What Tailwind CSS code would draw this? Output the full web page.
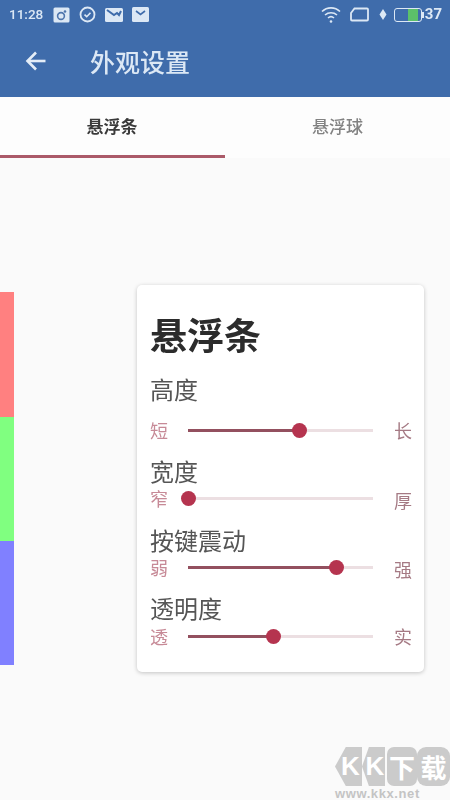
<!DOCTYPE html>
<html lang="zh">
<head>
<meta charset="utf-8">
<script src="https://cdn.jsdelivr.net/npm/@tailwindcss/browser@4"></script>
</head>
<body class="m-0">
<div class="relative w-[450px] h-[800px] overflow-hidden bg-[#fafafa] font-['Noto_Sans_CJK_SC','Noto_Sans',sans-serif]">
  <!-- header -->
  <header class="h-[97px] bg-[#3f6cab] text-[#dce8f5] shadow-[0_1px_2px_rgba(0,0,0,0.2)] flex flex-col">
    <div class="h-[28px] flex items-center px-[9px] pt-[1px]">
      <span class="font-['Roboto'] text-[13.5px] font-medium blur-[0.4px]">11:28</span>
      <div class="flex items-center gap-[9px] ml-[10px] blur-[0.4px]">
        <svg width="17" height="16" viewBox="0 0 17 16"><rect x="0.5" y="0.5" width="16" height="15" rx="1.5" fill="#dce8f5"/><circle cx="8" cy="9" r="3.4" fill="none" stroke="#4f76ad" stroke-width="1.6"/><circle cx="12" cy="4.5" r="1.3" fill="#4f76ad"/></svg>
        <svg width="17" height="17" viewBox="0 0 17 17"><circle cx="8.5" cy="8.5" r="7" fill="none" stroke="#dce8f5" stroke-width="1.8"/><path d="M5.5 8.7l2.2 2 3.8-4" fill="none" stroke="#dce8f5" stroke-width="1.6"/></svg>
        <svg width="18" height="14" viewBox="0 0 18 14"><rect width="18" height="14" rx="1.5" fill="#dce8f5"/><path d="M2 2l7 5 3-2 2 2 2-4" fill="none" stroke="#3f6cab" stroke-width="2"/></svg>
        <svg width="17" height="15" viewBox="0 0 17 15"><rect width="17" height="15" rx="1.5" fill="#dce8f5"/><path d="M4 4l4.5 3.5L13 4" fill="none" stroke="#3f6cab" stroke-width="1.6"/></svg>
      </div>
      <div class="ml-auto flex items-center blur-[0.4px]">
        <svg width="20" height="19" viewBox="0 0 20 19" fill="none" stroke="#dce8f5" stroke-width="1.6"><path d="M1 6.5a13 13 0 0 1 18 0"/><path d="M4 10a9 9 0 0 1 12 0"/><path d="M7 13a4.5 4.5 0 0 1 6 0"/><circle cx="10" cy="16.5" r="1.3" fill="#dce8f5" stroke="none"/></svg>
        <svg class="ml-[9px]" width="19" height="15" viewBox="0 0 19 15" fill="none" stroke="#dce8f5" stroke-width="1.8"><path d="M4.500 1.500h12.500a1 1 0 0 1 1 1V12.500a1 1 0 0 1-1 1H2a1 1 0 0 1-1-1V6z"/></svg>
        <svg class="ml-[10px]" width="8" height="11" viewBox="0 0 8 11"><path d="M4 0l3.500 5.500L4 11 0.500 5.500z" fill="#dce8f5"/></svg>
        <div class="ml-[7px] w-[28px] h-[14px] rounded-[3px] border-[1.5px] border-[#dce8f5] flex justify-end overflow-hidden pr-[3px]">
          <div class="w-[10px] h-full bg-[#5cc06a]"></div>
        </div>
        <div class="w-[2px] h-[6px] bg-[#dce8f5]"></div>
        <span class="font-['Roboto'] text-[15px] font-bold ml-[1px] mr-[-1px]">37</span>
      </div>
    </div>
    <div class="h-[69px] flex items-center pb-[2px]">
      <svg class="ml-[25px] mb-[2px] blur-[0.3px]" width="21" height="20" viewBox="0 0 21 20" fill="none" stroke="#e4edf7" stroke-width="2.6"><path d="M20.500 10H3"/><path d="M11 1.500L2.500 10l8.500 8.500"/></svg>
      <h1 class="ml-[44px] text-[25px] font-medium leading-none blur-[0.4px]">外观设置</h1>
    </div>
  </header>

  <!-- tabs -->
  <nav class="h-[61px] grid grid-cols-2 bg-[#fdfdfd] text-[17px]">
    <div class="flex items-center justify-center font-bold text-[#3a3a3a] border-b-[3px] border-[#ab5a69] pb-[1px] pr-[1px] blur-[0.4px]">悬浮条</div>
    <div class="flex items-center justify-center font-medium text-[#828282] pb-[4px] blur-[0.4px]">悬浮球</div>
  </nav>

  <!-- content -->
  <main class="flex items-start pt-[127px]">
    <div class="w-[14px] mt-[7px] flex flex-col shrink-0">
      <div class="h-[125px] bg-[#ff8080]"></div>
      <div class="h-[124px] bg-[#80ff80]"></div>
      <div class="h-[124px] bg-[#8080ff]"></div>
    </div>
    <section class="ml-[123px] w-[287px] h-[387px] bg-white rounded-[5px] shadow-[0_1px_4px_rgba(0,0,0,0.22)] pl-[14px] pr-[12px] pt-[27px]">
      <h2 class="text-[37px] leading-[44px] font-bold text-[#2c2c2c] ml-[-1px] blur-[0.4px]">悬浮条</h2>

      <div class="mt-[18px] text-[24px] leading-[30px] text-[#555555] ml-[-1px] blur-[0.4px]">高度</div>
      <div class="mt-[14px] h-[24px] flex items-center">
        <span class="w-[37px] ml-[-1px] text-[18px] leading-none text-[#c78a97] blur-[0.4px]">短</span>
        <div class="relative w-[185px] h-[3px] ml-[1px] bg-[#ecdfe2]">
          <div class="h-full w-[60%] bg-[#93505f]"></div>
          <div class="absolute top-[-6px] left-[60%] ml-[-7.500px] size-[15px] rounded-full bg-[#b5344f]"></div>
        </div>
        <span class="ml-[21px] text-[18px] leading-none text-[#a57a84] blur-[0.4px]">长</span>
      </div>

      <div class="mt-[14px] text-[24px] leading-[30px] text-[#555555] ml-[-1px] blur-[0.4px]">宽度</div>
      <div class="h-[24px] flex items-center">
        <span class="w-[37px] ml-[-1px] text-[18px] leading-none text-[#c78a97] blur-[0.4px]">窄</span>
        <div class="relative w-[185px] h-[3px] ml-[1px] bg-[#ecdfe2]">
          <div class="absolute top-[-6px] left-0 ml-[-7.500px] size-[15px] rounded-full bg-[#b5344f]"></div>
        </div>
        <span class="ml-[21px] mt-[3px] text-[18px] leading-none text-[#a57a84] blur-[0.4px]">厚</span>
      </div>

      <div class="mt-[15px] text-[24px] leading-[30px] text-[#555555] ml-[-1px] blur-[0.4px]">按键震动</div>
      <div class="h-[24px] flex items-center">
        <span class="w-[37px] ml-[-1px] text-[18px] leading-none text-[#c78a97] blur-[0.4px]">弱</span>
        <div class="relative w-[185px] h-[3px] ml-[1px] bg-[#ecdfe2]">
          <div class="h-full w-[80%] bg-[#93505f]"></div>
          <div class="absolute top-[-6px] left-[80%] ml-[-7.500px] size-[15px] rounded-full bg-[#b5344f]"></div>
        </div>
        <span class="ml-[21px] mt-[3px] text-[18px] leading-none text-[#a57a84] blur-[0.4px]">强</span>
      </div>

      <div class="mt-[14px] text-[24px] leading-[30px] text-[#555555] ml-[-1px] blur-[0.4px]">透明度</div>
      <div class="mt-[1px] h-[24px] flex items-center">
        <span class="w-[37px] ml-[-1px] text-[18px] leading-none text-[#c78a97] blur-[0.4px]">透</span>
        <div class="relative w-[185px] h-[3px] ml-[1px] bg-[#ecdfe2]">
          <div class="h-full w-[46%] bg-[#93505f]"></div>
          <div class="absolute top-[-6px] left-[46%] ml-[-7.500px] size-[15px] rounded-full bg-[#b5344f]"></div>
        </div>
        <span class="ml-[21px] text-[18px] leading-none text-[#a57a84] blur-[0.4px]">实</span>
      </div>
    </section>
  </main>

  <!-- watermark -->
  <div class="absolute left-[335px] top-[747px] w-[115px] flex flex-col items-start">
    <div class="flex text-white text-[26px] font-bold">
      <span class="w-[27px] h-[39px] bg-[#cbcbcb] [clip-path:polygon(40%_0,100%_0,100%_100%,40%_100%,0_50%)] flex items-center justify-center pl-[4px] font-['Liberation_Sans']">K</span>
      <span class="w-[23px] h-[39px] bg-[#cbcbcb] [clip-path:polygon(30%_0,100%_0,100%_100%,30%_100%,0_50%)] flex items-center justify-center pl-[3px] font-['Liberation_Sans']">K</span>
      <span class="ml-[2px] w-[30px] h-[39px] rounded-[7px] bg-[#cbcbcb] flex items-center justify-center">下</span>
      <span class="w-[33px] h-[39px] rounded-[9px] bg-[#cbcbcb] flex items-center justify-center">载</span>
    </div>
    <span class="mt-[1px] font-['Liberation_Sans'] text-[13px] leading-[14px] font-bold text-[#c4c4c4] tracking-[0.6px]">www.kkx.net</span>
  </div>
</div>
</body>
</html>
